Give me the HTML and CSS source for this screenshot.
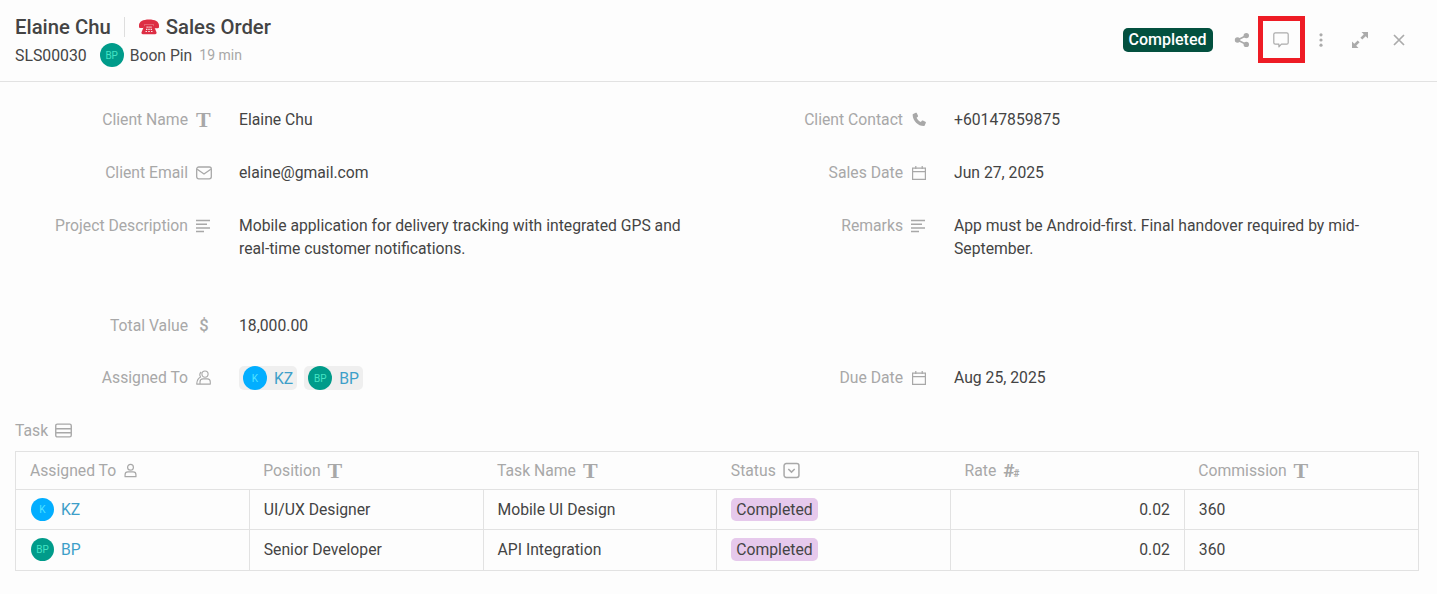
FILE: index.html
```html
<!DOCTYPE html>
<html lang="en">
<head>
<meta charset="utf-8">
<title>Sales Order</title>
<link rel="stylesheet" href="styles.css">
</head>
<body>
<svg class="defs" width="0" height="0" aria-hidden="true">
  <symbol id="i-lines" viewBox="0 0 16 14"><path d="M1 1.500h14M1 5.200h11M1 8.900h14M1 12.600h8" fill="none" stroke="currentColor" stroke-width="1.500"/></symbol>
  <symbol id="i-cal" viewBox="0 0 16 16"><path d="M1.600 3.200h12.800v11.200H1.600zM1.600 6.600h12.800M4.800 1v3M11.200 1v3" fill="none" stroke="currentColor" stroke-width="1.200"/></symbol>
  <symbol id="i-user" viewBox="0 0 16 16"><circle cx="8" cy="4.600" r="3.100" fill="none" stroke="currentColor" stroke-width="1.300"/><path d="M2.200 14.600v-2.200c0-1.700 1.300-3 3-3h5.600c1.700 0 3 1.300 3 3v2.200z" fill="none" stroke="currentColor" stroke-width="1.300" stroke-linejoin="round"/></symbol>
</svg>

<header class="top">
  <div class="top-left">
    <div class="title-row">
      <span class="title">Elaine Chu</span>
      <span class="title-rule"></span>
      <svg class="phone-emoji" viewBox="0 0 22 18" width="22" height="18"><path d="M1 7.500C1 3.500 5 1.500 11 1.500s10 2 10 6v1.500c0 .8-.6 1.200-1.200 1.200h-3c-.7 0-1.200-.5-1.200-1.200V6.500H6.400V8.800c0 .7-.5 1.200-1.200 1.200h-3C1.600 10 1 9.600 1 8.800z" fill="#dd2e44"/><path d="M6.800 6.500h8.400l3.300 7.800c.3.900-.2 2-1.400 2H4.900c-1.200 0-1.700-1.100-1.400-2z" fill="#dd2e44"/><path d="M8.500 8.500h1.300v1.200H8.500zM10.400 8.500h1.300v1.200h-1.300zM12.300 8.500h1.300v1.200h-1.300zM8 10.700h1.400v1.200H8zM10.300 10.700h1.400v1.200h-1.400zM12.600 10.700H14v1.200h-1.400zM7.500 12.900h1.500v1.200H7.500zM10.200 12.900h1.600v1.200h-1.600zM13 12.900h1.500v1.200H13z" fill="#fbe4e7"/></svg>
      <span class="title">Sales Order</span>
    </div>
    <div class="sub-row">
      <span class="code">SLS00030</span>
      <span class="avatar avatar-bp avatar-lg">BP</span>
      <span class="owner">Boon Pin</span>
      <span class="age">19 min</span>
    </div>
  </div>
  <div class="top-right">
    <span class="status-badge">Completed</span>
    <button class="action" aria-label="Share">
      <svg viewBox="0 0 16 16" width="16" height="16"><path d="M12.500 3.500 3.500 8l9 4.500" fill="none" stroke="currentColor" stroke-width="1.600"/><circle cx="12.300" cy="3.600" r="2.700" fill="currentColor"/><circle cx="3.500" cy="8" r="2.700" fill="currentColor"/><circle cx="12.300" cy="12.400" r="2.700" fill="currentColor"/></svg>
    </button>
    <button class="action action-marked" aria-label="Comments">
      <svg viewBox="0 0 16 16" width="16" height="16"><path d="M2.300.8h11.400c.8 0 1.500.7 1.500 1.500v8.400c0 .8-.7 1.500-1.500 1.500H8.400l-2.500 2.600v-2.600H2.300c-.8 0-1.500-.7-1.500-1.500V2.300c0-.8.7-1.500 1.500-1.500z" fill="none" stroke="currentColor" stroke-width="1.200" stroke-linejoin="round"/></svg>
      <span class="marker"></span>
    </button>
    <button class="action" aria-label="More">
      <svg viewBox="0 0 16 16" width="16" height="16"><circle cx="8" cy="2.800" r="1.600" fill="currentColor"/><circle cx="8" cy="8" r="1.600" fill="currentColor"/><circle cx="8" cy="13.200" r="1.600" fill="currentColor"/></svg>
    </button>
    <button class="action" aria-label="Expand">
      <svg viewBox="0 0 16 16" width="16" height="16"><path d="M9.500 0H16v6.500l-2.300-2.300-3.400 3.400-1.900-1.900 3.400-3.400zM6.500 16H0V9.500l2.300 2.300 3.400-3.400 1.900 1.900-3.400 3.400z" fill="currentColor"/></svg>
    </button>
    <button class="action" aria-label="Close">
      <svg viewBox="0 0 16 16" width="16" height="16"><path d="M3 3l10 10M13 3 3 13" fill="none" stroke="currentColor" stroke-width="1.700"/></svg>
    </button>
  </div>
</header>

<main class="body">
  <section class="fields">
    <div class="field">
      <span class="label">Client Name</span>
      <span class="ficon glyph-t">T</span>
      <span class="value">Elaine Chu</span>
    </div>
    <div class="field">
      <span class="label">Client Contact</span>
      <span class="ficon"><svg viewBox="0 0 16 16" width="15" height="15"><path d="M1.200 2.200 4 .8c.5-.2 1 0 1.200.4l1.200 2.700c.2.400.1.800-.2 1.100L4.900 6.100c.9 2 2.400 3.500 4.500 4.500l1.100-1.300c.3-.3.700-.4 1.100-.2l2.700 1.200c.5.200.7.700.5 1.200l-1.300 2.800c-.2.400-.5.600-.9.600C6.200 14.900 1 9.400.7 3.100c0-.4.100-.7.500-.9z" fill="currentColor"/></svg></span>
      <span class="value">+60147859875</span>
    </div>
    <div class="field">
      <span class="label">Client Email</span>
      <span class="ficon"><svg viewBox="0 0 16 14" width="16" height="14"><rect x=".7" y="1" width="14.600" height="11.800" rx="2" fill="none" stroke="currentColor" stroke-width="1.300"/><path d="M1.200 3.200 8 8l6.800-4.800" fill="none" stroke="currentColor" stroke-width="1.300"/></svg></span>
      <span class="value">elaine@gmail.com</span>
    </div>
    <div class="field">
      <span class="label">Sales Date</span>
      <span class="ficon"><svg width="16" height="16"><use href="#i-cal"/></svg></span>
      <span class="value">Jun 27, 2025</span>
    </div>
    <div class="field field-long">
      <span class="label">Project Description</span>
      <span class="ficon ficon-start"><svg width="16" height="14"><use href="#i-lines"/></svg></span>
      <span class="value">Mobile application for delivery tracking with integrated GPS and real-time customer notifications.</span>
    </div>
    <div class="field field-long">
      <span class="label">Remarks</span>
      <span class="ficon ficon-start"><svg width="16" height="14"><use href="#i-lines"/></svg></span>
      <span class="value">App must be Android-first. Final handover required by mid-September.</span>
    </div>
    <div class="field">
      <span class="label">Total Value</span>
      <span class="ficon glyph-dollar">$</span>
      <span class="value">18,000.00</span>
    </div>
    <div class="field field-empty"></div>
    <div class="field field-chips">
      <span class="label">Assigned To</span>
      <span class="ficon"><svg viewBox="0 0 16 16" width="17" height="17"><circle cx="9" cy="4.600" r="3.100" fill="none" stroke="currentColor" stroke-width="1.100"/><path d="M4 14.600v-2.200c0-1.700 1.300-3 3-3h4.300c1.700 0 3 1.300 3 3v2.200zM5.200 2.500C3.500 4 3.600 6 4.600 7.500 2.300 8.600.9 10.800.7 14.600H4" fill="none" stroke="currentColor" stroke-width="1.100" stroke-linejoin="round"/></svg></span>
      <span class="value chips">
        <span class="chip"><span class="avatar avatar-k avatar-lg">K</span><span class="link">KZ</span></span>
        <span class="chip"><span class="avatar avatar-bp avatar-lg">BP</span><span class="link">BP</span></span>
      </span>
    </div>
    <div class="field field-chips">
      <span class="label">Due Date</span>
      <span class="ficon"><svg width="16" height="16"><use href="#i-cal"/></svg></span>
      <span class="value">Aug 25, 2025</span>
    </div>
  </section>

  <div class="task-head">
    <span>Task</span>
    <svg viewBox="0 0 16 14" width="17" height="15"><rect x=".7" y="1" width="14.600" height="12" rx="1.500" fill="none" stroke="currentColor" stroke-width="1.300"/><path d="M1 5.300h14M1 9.100h14" fill="none" stroke="currentColor" stroke-width="1.300"/></svg>
  </div>

  <table class="tasks">
    <thead>
      <tr>
        <th><span class="th-in">Assigned To <svg width="15" height="15" viewBox="0 0 16 16"><use href="#i-user"/></svg></span></th>
        <th><span class="th-in">Position <span class="glyph-t">T</span></span></th>
        <th><span class="th-in">Task Name <span class="glyph-t">T</span></span></th>
        <th><span class="th-in">Status <svg viewBox="0 0 16 16" width="17" height="17"><rect x="1" y="1.500" width="14" height="13" rx="2" fill="none" stroke="currentColor" stroke-width="1.400"/><path d="M5 6.500 8 9.500l3-3" fill="none" stroke="currentColor" stroke-width="1.400"/></svg></span></th>
        <th><span class="th-in">Rate <span class="glyph-hash">#<small>#</small></span></span></th>
        <th><span class="th-in">Commission <span class="glyph-t">T</span></span></th>
      </tr>
    </thead>
    <tbody>
      <tr>
        <td><span class="person"><span class="avatar avatar-k">K</span><span class="link">KZ</span></span></td>
        <td>UI/UX Designer</td>
        <td>Mobile UI Design</td>
        <td><span class="pill">Completed</span></td>
        <td class="num">0.02</td>
        <td>360</td>
      </tr>
      <tr class="row-last">
        <td><span class="person"><span class="avatar avatar-bp">BP</span><span class="link">BP</span></span></td>
        <td>Senior Developer</td>
        <td>API Integration</td>
        <td><span class="pill">Completed</span></td>
        <td class="num">0.02</td>
        <td>360</td>
      </tr>
    </tbody>
  </table>
</main>
</body>
</html>
```

FILE: styles.css
```css
* { box-sizing: border-box; }
html, body { margin: 0; padding: 0; }
body {
  height: 594px;
  overflow: hidden;
  background: #fdfdfd;
  color: #444;
  font-family: Roboto, "Liberation Sans", sans-serif;
  font-size: 15.720px;
}
.defs { display: block; height: 0; }

/* header */
.top {
  height: 82px;
  padding: 15px 18px 0 15px;
  border-bottom: 1px solid #e2e2e2;
  display: flex;
  justify-content: space-between;
}
.title-row { display: flex; align-items: center; height: 24px; }
.title { font-size: 20.300px; font-weight: 500; color: #444; line-height: 24px; }
.title-rule { width: 1px; height: 20px; background: #dedede; margin: 0 13px; }
.phone-emoji { margin-right: 6px; }
.sub-row { display: flex; align-items: center; height: 24px; margin-top: 4px; }
.code { font-size: 15.800px; color: #444; }
.owner { font-size: 15.700px; color: #4a4a4a; margin-left: 6px; }
.age { font-size: 14px; color: #a8a8a8; margin-left: 7px; }
.sub-row .avatar { margin-left: 13px; }

.avatar {
  width: 23px;
  height: 23px;
  border-radius: 50%;
  display: inline-flex;
  align-items: center;
  justify-content: center;
  font-size: 10px;
  flex: none;
}
.avatar-lg { width: 24px; height: 24px; }
.avatar-k { background: #02aeff; color: #52e3ff; }
.avatar-bp { background: #009b8a; color: #45e3c4; }

.top-right { display: flex; align-items: center; height: 50px; }
.status-badge {
  background: #03503f;
  color: #fff;
  font-size: 16px;
  font-weight: 500;
  line-height: 24px;
  padding: 0 6px;
  border-radius: 5px;
  margin-right: 10px;
}
.action {
  position: relative;
  width: 39.300px;
  height: 40px;
  border: 0;
  padding: 0;
  background: none;
  color: #ababab;
  display: flex;
  align-items: center;
  justify-content: center;
}
.marker {
  position: absolute;
  left: -3.600px;
  top: -4px;
  width: 47px;
  height: 47px;
  border: 5px solid #ee1c25;
}

/* fields */
.body { padding: 26px 18px 0 15px; }
.fields { display: grid; grid-template-columns: 715px 1fr; row-gap: 30px; }
.field {
  display: grid;
  grid-template-columns: 173px 16px 1fr;
  column-gap: 8px;
  line-height: 23px;
  min-height: 23px;
}
.field-long { padding-bottom: 24px; }
.field-chips { margin-top: -1px; }
.label { color: #a8a8a8; text-align: right; }
.ficon {
  color: #a8a8a8;
  height: 23px;
  display: flex;
  align-items: center;
  justify-content: center;
}
.ficon-start { justify-content: flex-start; margin-left: -1px; }
.value { color: #444; margin-left: 19px; max-width: 460px; }
.glyph-t {
  font-family: "Liberation Serif", serif;
  font-weight: 700;
  font-size: 22px;
  color: #a8a8a8;
  line-height: 1;
}
.ficon.glyph-t { line-height: 23px; justify-content: flex-start; }
.glyph-dollar { font-weight: 500; font-size: 16.500px; }
.glyph-hash { font-weight: 700; font-size: 19px; color: #a8a8a8; letter-spacing: -1px; line-height: 1; }
.glyph-hash small { font-size: 10px; letter-spacing: 0; }
.chips { display: flex; gap: 7px; }
.chip {
  display: inline-flex;
  align-items: center;
  height: 24px;
  padding: 0 4px;
  background: #efefef;
  border-radius: 5px;
}
.chip .link { margin-left: 7px; }
.link { color: #3d9fc9; }

/* task table */
.task-head {
  display: flex;
  align-items: center;
  gap: 7px;
  margin-top: 28px;
  height: 24px;
  color: #a8a8a8;
}
.tasks {
  width: 1403.600px;
  margin-top: 9px;
  table-layout: fixed;
  border-collapse: collapse;
  color: #444;
}
.tasks th {
  height: 38px;
  padding: 0 14px;
  text-align: left;
  font-weight: 400;
  color: #a8a8a8;
  font-size: inherit;
  border-top: 1px solid #e2e2e2;
  border-bottom: 1px solid #e2e2e2;
}
.tasks th:first-child { border-left: 1px solid #e2e2e2; }
.tasks th:last-child { border-right: 1px solid #e2e2e2; }
.th-in { display: inline-flex; align-items: center; gap: 7px; color: #a8a8a8; }
.tasks td {
  height: 40px;
  padding: 0 14px;
  border: 1px solid #e2e2e2;
}
.tasks .row-last td { height: 41px; padding-bottom: 1px; }
.tasks .num { text-align: right; }
.person { display: flex; align-items: center; gap: 7px; margin-left: 1px; }
.pill {
  display: inline-block;
  background: #e6c9ec;
  border-radius: 5px;
  padding: 0 5px;
  line-height: 23px;
  color: #444;
}
```
